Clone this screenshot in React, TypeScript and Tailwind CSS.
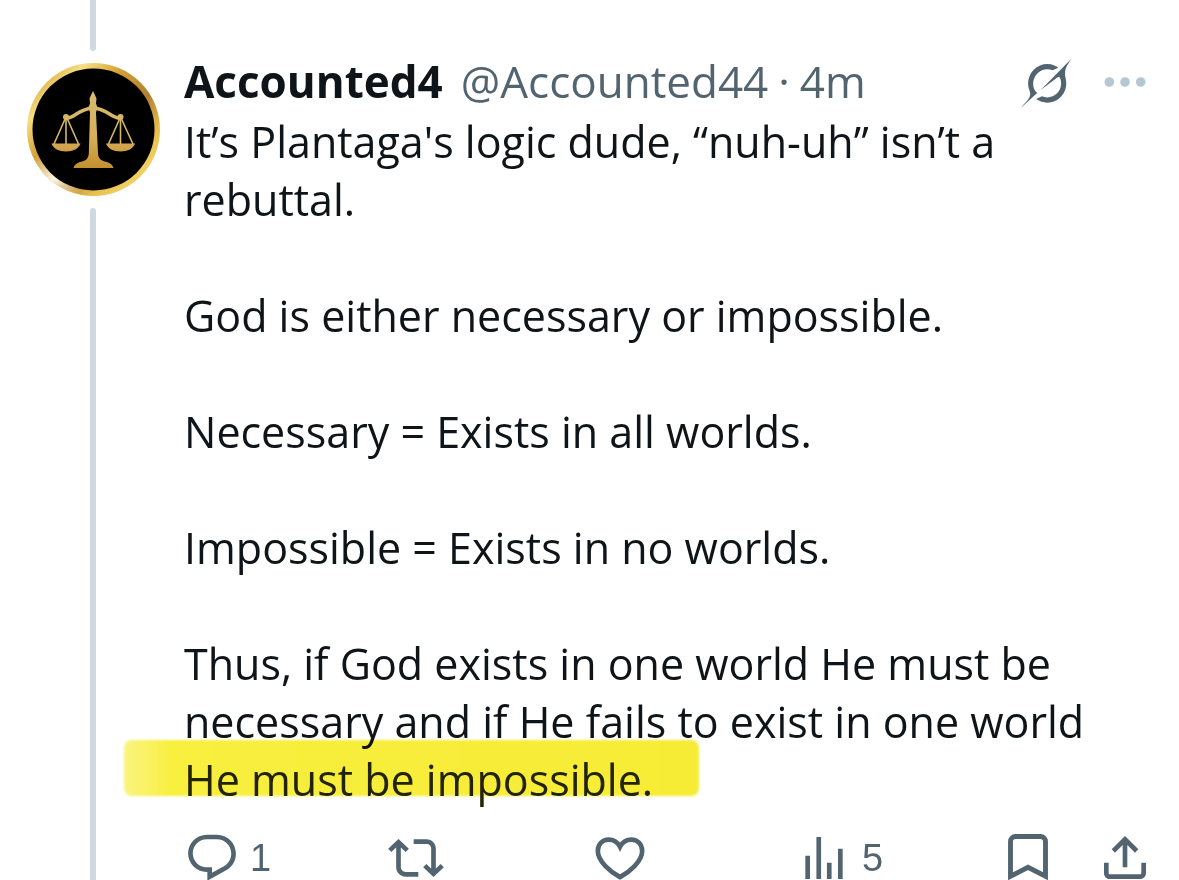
import type { ReactNode } from 'react';

const paragraphs: string[][] = [
  ['It’s Plantaga\'s logic dude, “nuh-uh” isn’t a', 'rebuttal.'],
  ['God is either necessary or impossible.'],
  ['Necessary = Exists in all worlds.'],
  ['Impossible = Exists in no worlds.'],
];

function Icon({ children }: { children: ReactNode }) {
  return (
    <svg viewBox="0 0 24 24" className="size-14 shrink-0 fill-current" aria-hidden="true">
      {children}
    </svg>
  );
}

function Avatar() {
  return (
    <svg viewBox="-1 0 134 134" className="mt-3 mb-[11px] size-[134px] shrink-0" role="img" aria-label="Accounted4">
      <defs>
        <linearGradient id="ring" x1="0.1" y1="0.1" x2="0.9" y2="0.9">
          <stop offset="0" stopColor="#d9a93a" />
          <stop offset="0.15" stopColor="#f6df83" />
          <stop offset="0.35" stopColor="#d3a034" />
          <stop offset="0.6" stopColor="#b08030" />
          <stop offset="0.8" stopColor="#e8bf4c" />
          <stop offset="1" stopColor="#f3d873" />
        </linearGradient>
        <radialGradient id="shine" cx="0.2" cy="0.87" r="0.22">
          <stop offset="0" stopColor="#fffbe6" />
          <stop offset="1" stopColor="#fffbe6" stopOpacity="0" />
        </radialGradient>
        <linearGradient id="gold" x1="0" y1="28" x2="0" y2="105" gradientUnits="userSpaceOnUse">
          <stop offset="0" stopColor="#d8bd72" />
          <stop offset="0.6" stopColor="#d6ae58" />
          <stop offset="1" stopColor="#c38f30" />
        </linearGradient>
      </defs>
      <circle cx="66.5" cy="66.5" r="66.5" fill="url(#ring)" />
      <circle cx="66.5" cy="66.5" r="66.5" fill="url(#shine)" />
      <circle cx="66.5" cy="66.5" r="61" fill="#000" />
      <g fill="url(#gold)">
        <path d="M66 28l1.500 3 2 4.500-.5 5 1.500 4-1.500 5L71 90c.3 5 2 7 7 8.500 5 1.200 7.500 3 8.500 6.500h-40c1-3.500 3.500-5.300 8.500-6.500 5-1.500 6.500-3.500 6.800-8.500L63 49.500l-1.500-5 1.500-4-.5-5L64.500 31z" />
        <path d="M24.500 80.500h29c-1.500 5-7.300 8-14.500 8s-13-3-14.500-8z" />
        <path d="M79 80.500h29c-1.500 5-7.300 8-14.500 8s-13-3-14.500-8z" />
        <circle cx="39" cy="54" r="3" />
        <circle cx="93.500" cy="54" r="3" />
      </g>
      <g fill="none" stroke="#d6b766">
        <path d="M39 55.500c10-1 12-9.500 27-10.500 15 1 17 9.500 27.500 10.500" strokeWidth="3.500" />
        <path d="M38.500 55L27 81M40 55l11.500 26M93 55L81.500 81M94 55l12 26" strokeWidth="1.600" />
        <path d="M39 55v26M93.500 55v26" strokeWidth="1.600" />
      </g>
    </svg>
  );
}

function GrokIcon() {
  return (
    <svg viewBox="0 0 33 32" className="h-[50px] w-[51px] fill-current" aria-hidden="true">
      <path d="M12.745 20.54l10.97-8.19c.539-.4 1.307-.244 1.564.38 1.349 3.288.746 7.241-1.938 9.955-2.683 2.714-6.417 3.31-9.83 1.954l-3.728 1.745c5.347 3.697 11.84 2.782 15.898-1.324 3.219-3.255 4.216-7.692 3.284-11.693l.008.009c-1.351-5.878.332-8.227 3.782-13.031L33 0l-4.54 4.59v-.014L12.743 20.544m-2.263 1.987c-3.837-3.707-3.175-9.446.1-12.755 2.42-2.449 6.388-3.448 9.852-1.979l3.72-1.737c-.67-.49-1.53-1.017-2.515-1.387-4.455-1.854-9.789-.931-13.41 2.728-3.483 3.523-4.579 8.94-2.697 13.561 1.405 3.454-.899 5.898-3.22 8.364C1.49 30.2.666 31.074 0 32l10.478-9.466" />
    </svg>
  );
}

function Header() {
  return (
    <header className="flex h-[61px] items-start justify-between text-[44px]">
      <div className="flex items-baseline whitespace-nowrap leading-[58px] text-[#536471]">
        <a href="#profile" className="mr-[18px] font-bold text-[#0f1419]">Accounted4</a>
        <a href="#profile">@Accounted44</a>
        <span className="mx-[10px]">·</span>
        <time>4m</time>
      </div>
      <div className="flex items-center pt-[6px] text-[#536471]">
        <button type="button" aria-label="Grok" className="mr-[31px]">
          <GrokIcon />
        </button>
        <button type="button" aria-label="More">
          <svg viewBox="0 0 50 50" className="size-[50px] fill-[#b5c7d1]" aria-hidden="true">
            <circle cx="6.3" cy="24" r="4.8" />
            <circle cx="22" cy="24" r="4.8" />
            <circle cx="37.7" cy="24" r="4.8" />
          </svg>
        </button>
      </div>
    </header>
  );
}

function Actions() {
  return (
    <div className="mt-[21px] flex font-['Liberation_Sans',sans-serif] text-[38px] leading-10 text-[#536471]">
      <button type="button" aria-label="Reply" className="flex flex-1 items-center gap-[10px]">
        <Icon>
          <path d="M1.751 10c0-4.420 3.584-8 8.005-8h4.366c4.490 0 8.129 3.640 8.129 8.130 0 2.960-1.607 5.680-4.196 7.110l-8.054 4.460v-3.690h-.067c-4.490.1-8.183-3.510-8.183-8.010zm8.005-6c-3.317 0-6.005 2.690-6.005 6 0 3.370 2.770 6.080 6.138 6.010l.351-.01h1.761v2.300l5.087-2.810c1.951-1.080 3.163-3.130 3.163-5.360 0-3.390-2.744-6.130-6.129-6.130H9.756z" />
        </Icon>
        <span>1</span>
      </button>
      <button type="button" aria-label="Repost" className="flex flex-1 items-center">
        <Icon>
          <path d="M4.500 3.880l4.432 4.140-1.364 1.460L5.500 7.550V16c0 1.100.896 2 2 2H13v2H7.500c-2.209 0-4-1.790-4-4V7.550L1.432 9.480.068 8.020 4.500 3.880zM16.500 6H11V4h5.500c2.209 0 4 1.790 4 4v8.450l2.068-1.930 1.364 1.460-4.432 4.140-4.432-4.140 1.364-1.460 2.068 1.930V8c0-1.100-.896-2-2-2z" />
        </Icon>
      </button>
      <button type="button" aria-label="Like" className="flex flex-1 items-center">
        <Icon>
          <path
            d="M12 20.200C8 18 2.500 13.500 2.500 9c0-3 2.100-4.900 4.600-4.900 2.100 0 3.900 1.100 4.900 3.100 1-2 2.800-3.100 4.900-3.100 2.500 0 4.600 1.900 4.600 4.900 0 4.500-5.500 9-9.500 11.200z"
            fill="none"
            stroke="currentColor"
            strokeWidth="2"
          />
        </Icon>
      </button>
      <button type="button" aria-label="Views" className="flex flex-1 items-center gap-[10px]">
        <Icon>
          <path d="M8.750 21V3h2v18h-2zM18 21V8h2v13h-2zM4 21V11h2v10H4zm9.250 0v-7h2v7h-2z" />
        </Icon>
        <span>5</span>
      </button>
      <button type="button" aria-label="Bookmark" className="mr-[41px]">
        <Icon>
          <path
            d="M4.500 19.800V5c0-1.200.9-2.200 2.200-2.200h10.600c1.300 0 2.200 1 2.200 2.200v14.800L12 16z"
            fill="none"
            stroke="currentColor"
            strokeWidth="2.100"
          />
        </Icon>
      </button>
      <button type="button" aria-label="Share">
        <Icon>
          <path d="M12 2.590l5.700 5.700-1.410 1.420L13 6.410V16h-2V6.410l-3.300 3.300-1.410-1.420L12 2.590zM21 14l-.02 4.510c0 1.380-1.120 2.490-2.500 2.490H5.500C4.110 21 3 19.880 3 18.500V14h2v4.500c0 .28.22.5.5.5h12.980c.28 0 .5-.22.5-.5L19 14h2z" />
        </Icon>
      </button>
    </div>
  );
}

export default function App() {
  return (
    <article className="flex min-h-screen bg-white px-[26px] font-['Open_Sans',sans-serif] text-[43px] text-[#0f1419]">
      {/* Thread line and avatar */}
      <div className="mr-6 flex shrink-0 flex-col items-center">
        <div className="h-[51px] w-[6px] rounded-b-full bg-[#cfd9de]" />
        <Avatar />
        <div className="w-[6px] flex-1 rounded-t-full bg-[#cfd9de]" />
      </div>

      <div className="min-w-0 flex-1 pt-[52px]">
        <Header />
        <div className="space-y-[58px] leading-[58px] whitespace-nowrap">
          {paragraphs.map((lines) => (
            <p key={lines[0]}>
              {lines.map((line) => (
                <span key={line} className="block">{line}</span>
              ))}
            </p>
          ))}
          <p>
            <span className="block">Thus, if God exists in one world He must be</span>
            <span className="block">necessary and if He fails to exist in one world</span>
            <mark className="relative inline-block bg-transparent text-[#232508]">
              He must be impossible.
              {/* Highlighter stroke */}
              <span className="absolute -top-[11px] -right-[46px] -left-[60px] h-14 rounded-lg bg-linear-to-r from-[#fbf47c] via-[#f8ef3f] via-8% to-[#f7ec35] mix-blend-multiply blur-[1px]" />
            </mark>
          </p>
        </div>
        <Actions />
      </div>
    </article>
  );
}
